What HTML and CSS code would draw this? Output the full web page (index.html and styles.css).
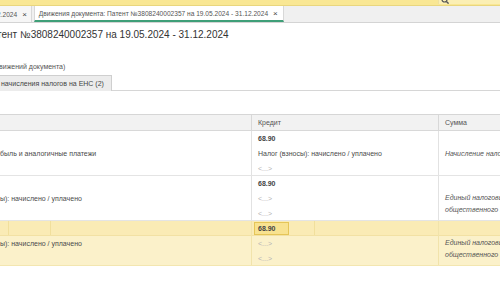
FILE: index.html
```html
<!DOCTYPE html>
<html lang="ru">
<head>
	<meta charset="UTF-8">
	<title>Движения документа</title>
	<link rel="stylesheet" href="styles.css">
</head>
<body>
	<!-- верхняя панель -->
	<div class="topbar">
		<div class="search">
			<svg class="lens" width="8" height="8" viewBox="0 0 8 8"><circle cx="3.5" cy="3.5" r="2.5" fill="none" stroke="#555" stroke-width="1.2"/><path d="M5.4 5.4 L7.6 7.6" stroke="#555" stroke-width="1.4"/></svg>
		</div>
	</div>
	<!-- вкладки окон -->
	<div class="tabs">
		<div class="tab">2.2024 <span class="close">×</span></div>
		<div class="tab active">Движения документа: Патент №3808240002357 на 19.05.2024 - 31.12.2024 <span class="close">×</span></div>
	</div>

	<h1 class="title">тент №3808240002357 на 19.05.2024 - 31.12.2024</h1>
	<div class="note">вижений документа)</div>

	<div class="subtabs">
		<div class="subtab">начисления налогов на ЕНС (2)</div>
	</div>

	<!-- таблица движений -->
	<div class="grid">
		<div class="row head">
			<div class="cell"></div>
			<div class="cell sep">Кредит</div>
			<div class="cell sep">Сумма</div>
		</div>

		<div class="row">
			<div class="cell">
				<div class="line"></div>
				<div class="line">быль и аналогичные платежи</div>
			</div>
			<div class="cell sep">
				<div class="line num">68.90</div>
				<div class="line">Налог (взносы): начислено / уплачено</div>
				<div class="line empty">&lt;...&gt;</div>
			</div>
			<div class="cell sep">
				<div class="line"></div>
				<div class="line it">Начисление налога</div>
			</div>
		</div>

		<div class="row">
			<div class="cell">
				<div class="line"></div>
				<div class="line">ы): начислено / уплачено</div>
			</div>
			<div class="cell sep">
				<div class="line num">68.90</div>
				<div class="line empty">&lt;...&gt;</div>
				<div class="line empty">&lt;...&gt;</div>
			</div>
			<div class="cell sep">
				<div class="line"></div>
				<div class="multi it">Единый налоговый платеж<br>общественного питания</div>
			</div>
		</div>

		<div class="row current">
			<div class="cell">
				<div class="line first"><span class="mark a"></span><span class="mark b"></span></div>
				<div class="line">ы): начислено / уплачено</div>
			</div>
			<div class="cell sep">
				<div class="line first"><span class="focus num">68.90</span><span class="mark c"></span></div>
				<div class="line empty">&lt;...&gt;</div>
				<div class="line empty">&lt;...&gt;</div>
			</div>
			<div class="cell sep">
				<div class="line first"></div>
				<div class="multi it">Единый налоговый платеж<br>общественного питания</div>
			</div>
		</div>
	</div>
</body>
</html>
```

FILE: styles.css
```css
* {
	margin: 0;
	padding: 0;
	box-sizing: border-box;
}
body {
	width: 500px;
	height: 300px;
	overflow: hidden;
	background: #fff;
	font-family: "Liberation Sans", Arial, sans-serif;
	font-size: 7px;
	color: #4a4a4a;
}
.topbar {
	height: 6px;
	background: #f9e794;
	border-bottom: 1px solid #e9d67e;
	overflow: hidden;
}
.search {
	display: flex;
	align-items: flex-end;
	margin: -7px 0 0 438px;
	height: 11px;
	width: 70px;
	padding-left: 2px;
	background: #fbefb4;
	border-left: 1px solid #efe0a0;
}
.lens {
	display: block;
}
.tabs {
	display: flex;
	height: 17px;
	background: #f0f0f0;
	border-bottom: 1px solid #d4d4d4;
	font-size: 6.6px;
}
.tab {
	display: flex;
	align-items: center;
	padding: 0 4px 0 0;
	margin-left: -3px;
	background: #f6f6f6;
	border-right: 1px solid #d8d8d8;
	color: #555;
	white-space: nowrap;
}
.tab.active {
	margin-left: 2px;
	padding: 0 5px 0 4px;
	background: #fff;
	border-bottom: 2px solid #3f9f78;
	border-left: 1px solid #d8d8d8;
}
.close {
	margin-left: 5px;
	font-size: 8px;
	color: #444;
}
.title {
	margin: 6px 0 0 -3px;
	font-size: 10px;
	font-weight: normal;
	line-height: 12px;
	color: #333;
	white-space: nowrap;
}
.note {
	margin: 21px 0 0 -1px;
	color: #555;
	line-height: 9px;
}
.subtabs {
	display: flex;
	margin-top: 4px;
	border-bottom: 1px solid #d6d6d6;
	height: 16px;
}
.subtab {
	display: flex;
	align-items: center;
	padding: 0 7px 0 2px;
	margin-left: -2px;
	height: 16px;
	background: #ececec;
	border: 1px solid #cfcfcf;
	border-bottom: none;
	color: #444;
}
.grid {
	margin-top: 23px;
}
.row {
	display: grid;
	grid-template-columns: 251px 187px 1fr;
	height: 45px;
	border-bottom: 1px solid #e4e4e4;
}
.row.head {
	height: 17px;
	background: #f2f2f2;
	border-top: 1px solid #d6d6d6;
	border-bottom: 1px solid #d8d8d8;
}
.head .cell {
	display: flex;
	align-items: center;
	color: #555;
}
.cell {
	padding-left: 0;
	white-space: nowrap;
	overflow: hidden;
}
.cell.sep {
	padding-left: 6px;
	border-left: 1px solid #e2e2e2;
}
.head .cell.sep {
	border-left-color: #d8d8d8;
}
.line {
	height: 15px;
	line-height: 15px;
}
.num {
	font-weight: bold;
	color: #444;
}
.empty {
	color: #b4b4b4;
}
.it {
	font-style: italic;
	color: #555;
}
.multi {
	padding-top: 1px;
	line-height: 12px;
}
.row.current {
	background: #fbf1ca;
	border-bottom: 1px solid #f3e6b0;
}
.current .cell.sep {
	border-left-color: #f1e3ab;
}
.line.first {
	position: relative;
	background: #faebb5;
	border-bottom: 1px solid #f2e1a4;
}
.current .cell.sep .line.first {
	margin-left: -6px;
	padding-left: 2px;
}
.focus {
	display: inline-block;
	margin-top: 1px;
	padding-left: 3px;
	width: 35px;
	height: 13px;
	line-height: 12px;
	background: #f8e290;
	border: 1px solid #e5c558;
}
.mark {
	position: absolute;
	top: 0;
	width: 1px;
	height: 14px;
	background: #f1df9c;
}
.mark.a {
	left: 8px;
}
.mark.b {
	left: 50px;
}
.mark.c {
	left: 62px;
}
```
